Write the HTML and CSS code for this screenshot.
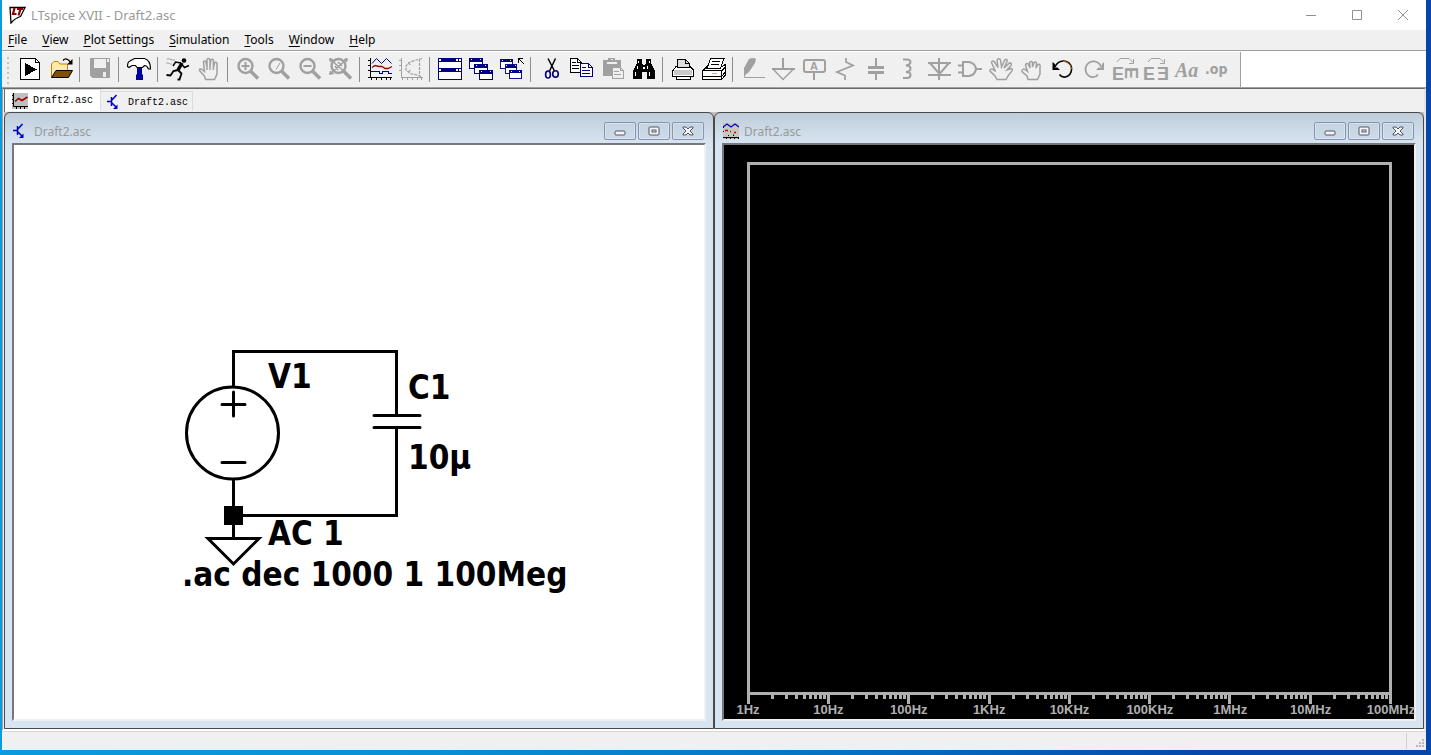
FILE: index.html
```html
<!DOCTYPE html>
<html lang="en">
<head>
    <meta charset="UTF-8">
    <meta name="viewport" content="width=device-width, initial-scale=1.0">
    <title>LTspice XVII - Draft2.asc</title>
    <link rel="stylesheet" href="styles.css">
</head>
<body>
    <!-- Shared symbols -->
    <svg class="defs" aria-hidden="true">
        <symbol id="lens" viewBox="0 0 24 24">
            <circle cx="9.5" cy="9" r="7" fill="none" stroke="#a0a0a0" stroke-width="2.4"/>
            <path d="M14.500 14L22 21.500" stroke="#a0a0a0" stroke-width="3.600"/>
        </symbol>
        <symbol id="transistor" viewBox="0 0 16 16">
            <path d="M0 7.500H4M4.500 3V12M5 6L9.500 1M5 9L9 13" fill="none" stroke="#0000c0" stroke-width="1.500"/>
            <path d="M10.500 10.500V15H6z" fill="#0000c0"/>
        </symbol>
        <symbol id="decade" viewBox="0 0 81 9">
            <path d="M0 0h3v9h-3zM24 0h3v4h-3zM38 0h3v4h-3zM48 0h3v4h-3zM56 0h3v4h-3zM62 0h3v4h-3zM67 0h3v4h-3zM72 0h3v4h-3zM76 0h3v4h-3z" fill="#b0b0b0"/>
        </symbol>
        <symbol id="cascade" viewBox="0 0 24 24">
            <g fill="#fff" stroke="#000080">
                <path d="M.5 1.500h13v10H.5z"/><path d="M1 3h13" stroke-width="3"/>
                <path d="M5.500 7.500h13v9h-13z"/><path d="M6 9h13" stroke-width="3"/>
                <path d="M10.500 13.500h13v9h-13z"/><path d="M11 15h13" stroke-width="3"/>
            </g>
            <path d="M2 2h1v1H2zM11 2h1v1h-1zM7 8h1v1H7zM16 8h1v1h-1zM12 14h1v1h-1zM21 14h1v1h-1z" fill="#fff"/>
        </symbol>
    </svg>

    <div class="app">
        <header class="titlebar">
            <svg class="logo" width="18" height="18" viewBox="0 0 18 18">
                <path d="M2 1.500H17L12.500 10.500C9 11.500 6 13.500 3 17z" fill="#fff" stroke="#000" stroke-width="1.300"/>
                <path d="M6.500 2L5 8H8.500M9 3H15M12.500 3L10.500 9.500" fill="none" stroke="#8b0000" stroke-width="2.200"/>
            </svg>
            <h1>LTspice XVII - Draft2.asc</h1>
            <div class="caption-buttons">
                <button aria-label="Minimize"><svg width="12" height="12"><path d="M1 6.500H11"/></svg></button>
                <button aria-label="Maximize"><svg width="12" height="12"><path d="M1.500 1.500h9v9h-9z"/></svg></button>
                <button aria-label="Close"><svg width="12" height="12"><path d="M1 1L11 11M11 1L1 11"/></svg></button>
            </div>
        </header>

        <nav class="menubar">
            <button><u>F</u>ile</button>
            <button><u>V</u>iew</button>
            <button><u>P</u>lot Settings</button>
            <button><u>S</u>imulation</button>
            <button><u>T</u>ools</button>
            <button><u>W</u>indow</button>
            <button><u>H</u>elp</button>
        </nav>

        <div class="toolbar-row">
            <div class="toolbar" role="toolbar" aria-label="Main">
                <span class="grip"></span>
                <button aria-label="Run"><svg viewBox="0 0 24 24" class="crisp"><path d="M2.500 1.500H17.500L21.500 5.500V22.500H2.500z" fill="#fff" stroke="#000"/><path d="M17.500 1.500V5.500H21.500" fill="none" stroke="#000"/><path d="M7 6L19 12.500 7 19z"/></svg></button>
                <button aria-label="Open"><svg viewBox="0 0 24 24"><path d="M2.500 20V7L5 4.500H9L11 7H18.500V13" fill="#ffe9b0" stroke="#c08000"/><path d="M2.500 20.500L7 13.500H23.500L19.500 20.500z" fill="#805000" stroke="#000"/><path d="M14 3.500C16 1 19.500 1.500 21.500 5.500" fill="none" stroke="#000" stroke-width="1.300"/><path d="M23.500 2V7.500H18z"/></svg></button>
                <span class="sep"></span>
                <button aria-label="Save"><svg viewBox="0 0 24 24" class="crisp"><path d="M2 1h20v20H4l-2-2z" fill="#a0a0a0"/><path d="M6 2h12v9H6zM19 2h2v3h-2zM15 15h3v5h-3z" fill="#efefef"/></svg></button>
                <span class="sep"></span>
                <button aria-label="Control panel"><svg viewBox="0 0 24 24"><path d="M10 9h5v8l1 1v5H9v-5l1-1z" fill="#0000a0"/><path d="M.5 9.500C.5 7 1.500 4.500 3 4L7.500 1.500H17.500C21 2.500 23.500 6 23.500 12H21.500C20.500 9.500 19 8.500 17.500 8.500L15.500 10.500H10L8.500 8.500H5L2 10.500z" fill="#fff" stroke="#000" stroke-width="1.200"/></svg></button>
                <span class="sep"></span>
                <button aria-label="Run simulation"><svg viewBox="0 0 24 24"><circle cx="18" cy="3.500" r="2.300"/><g fill="none" stroke="#000"><path d="M16 6L12 13" stroke-width="3.500"/><path d="M15 6L9.500 5 7 9M15.500 7L18.500 10.500 23 8.500" stroke-width="1.500"/><path d="M12 13L7.500 14 4.500 18.500.5 18M12 13L15.500 16.500 13.500 22.500H11.500" stroke-width="1.800"/></g><path d="M1 2C4 1 6 4 9 3M0 6C3 5 4 8 6 7" fill="none" stroke="#a0a0a0"/></svg></button>
                <button aria-label="Halt"><svg viewBox="0 0 24 24"><path d="M8.500 22.500L7.500 19 2.500 13.500C2 12 4 11.500 5 12.500L7.500 14.500 6.500 5C7 3.500 8.500 4 9 5L10 10V2.500C10.500 1 12.500 1 13 2.500V10L13.800 3C14.500 1.800 16 2 16.400 3V11L17.500 6C18 5 19.800 5 20 6.500V17L17.500 22.500zM10 10V13M13 10V13M16.400 10V13" fill="none" stroke="#a0a0a0" stroke-width="1.500"/></svg></button>
                <span class="sep"></span>
                <button aria-label="Zoom in"><svg viewBox="0 0 24 24"><use href="#lens"/><path d="M5.500 9H13.500M9.500 5V13" stroke="#a0a0a0" stroke-width="2"/></svg></button>
                <button aria-label="Pan"><svg viewBox="0 0 24 24"><use href="#lens"/><path d="M9 12.500L13 6" stroke="#a0a0a0"/></svg></button>
                <button aria-label="Zoom out"><svg viewBox="0 0 24 24"><use href="#lens"/><path d="M5.500 9H13.500" stroke="#a0a0a0" stroke-width="2"/></svg></button>
                <button aria-label="Zoom to fit"><svg viewBox="0 0 24 24"><use href="#lens"/><path d="M1 2L18 17M18 2L1 17M0 2.500H4M15 2.500H19M1.500 5V1M17.500 5V1M1.500 14V18M0 16.500H5M6 9L9 13M9 5L13 9" fill="none" stroke="#a0a0a0" stroke-width="1.600"/></svg></button>
                <span class="sep"></span>
                <button aria-label="Autorange"><svg viewBox="0 0 24 24"><path class="crisp" d="M2.500 1V20.500H24M0 3.500H2M0 8.500H2M0 13.500H2M0 20.500H2M3.500 21V23M8.500 21V23M13.500 21V23M18.500 21V23M22.500 21V23" fill="none" stroke="#000"/><path d="M4 6.500L8.500 1.500 13.500 6.500 18.500 1.500 23.500 6.500" fill="none" stroke="#000080"/><path d="M4 10.500L7 8.500 11 9.500 14 9.500 17 11.500H20L24 9.500" fill="none" stroke="#a00000" stroke-width="1.300"/><path class="crisp" d="M3 14.500H11.500V16.500H14.500V14.500H20.500V16.500H24" fill="none" stroke="#0000a0"/></svg></button>
                <button aria-label="Plot limits"><svg viewBox="0 0 24 24"><path class="crisp" d="M2.500 1V20.500H24M0 3.500H2M0 8.500H2M0 13.500H2M3.500 21V23M8.500 21V23M13.500 21V23M18.500 21V23M22.500 21V23" fill="none" stroke="#a0a0a0"/><path d="M23 1.500L17 3 10 5.500 7 9V13L11 16.500 18 18 23 20M20.500 2V19M9 6L12 8M9 15L12 13" fill="none" stroke="#a0a0a0" stroke-width="1.200" stroke-dasharray="3 1"/></svg></button>
                <span class="sep"></span>
                <button aria-label="Tile windows"><svg viewBox="0 0 24 24" class="crisp"><path d="M.5 1.500h23v21H.5z" fill="#fff" stroke="#000080"/><path d="M0 1h24v4H0zM0 11h24v4H0z" fill="#000080"/><path d="M1 2h2v2H1zM18 2h2v2h-2zM21 2h2v2h-2zM1 12h2v2H1zM18 12h2v2h-2zM21 12h2v2h-2z" fill="#fff"/></svg></button>
                <button aria-label="Cascade windows"><svg viewBox="0 0 24 24" class="crisp"><use href="#cascade"/></svg></button>
                <button aria-label="Close windows"><svg viewBox="0 0 24 24" class="crisp"><use href="#cascade" x="0" y="1" width="22" height="22"/><path d="M18 1h5v1h-3l4 5v1l-5-5v3h-1z"/></svg></button>
                <span class="sep"></span>
                <button aria-label="Cut"><svg viewBox="0 0 24 24"><path d="M9 1.500L15.500 14M16.500 1.500L10.500 14" stroke="#000" stroke-width="1.500"/><g fill="none" stroke="#000080" stroke-width="1.600"><ellipse cx="9" cy="17.500" rx="2.400" ry="3.500"/><ellipse cx="16.500" cy="17" rx="2.800" ry="3.200"/></g></svg></button>
                <button aria-label="Copy"><svg viewBox="0 0 24 24" class="crisp"><path d="M.5 1.500h7l4 4v10H.5z" fill="#fff" stroke="#000"/><path d="M7.500 1.500v4h4M2 5.500h4M2 8.500h7M2 11.500h7" fill="none" stroke="#000"/><path d="M10.500 6.500h8l4 4v9h-12z" fill="#fff" stroke="#000080"/><path d="M18.500 6.500v4h4M12 10.500h4M12 13.500h8M12 16.500h8" fill="none" stroke="#000080"/></svg></button>
                <button aria-label="Paste"><svg viewBox="0 0 24 24" class="crisp"><path d="M2 3h5V1h7v2h6v16H2z" fill="#a0a0a0"/><path d="M6 5h10v2H6zM10 2h2v1h-2z" fill="#efefef"/><path d="M11.500 10.500h8l3 3v8h-11z" fill="#efefef" stroke="#a0a0a0"/><path d="M19.500 10.500v3h3M13 14.500h5M13 17.500h7" stroke="#a0a0a0" fill="none"/></svg></button>
                <button aria-label="Find"><svg viewBox="0 0 24 24" class="crisp"><path d="M5 2h5v4l1 2h2l1-2V2h5v4l3 6 1 2v8h-8v-7h-5v7H1v-8l1-2 3-6z"/><path d="M6 4h1v2H6zM17 4h1v2h-1zM5 9h1v3H5zM15 9h1v3h-1zM3 15h1v4H3zM17 15h1v4h-1zM11 10h2v2h-2z" fill="#fff"/></svg></button>
                <span class="sep"></span>
                <button aria-label="Print"><svg viewBox="0 0 24 24" class="crisp"><path d="M1.500 19.500V14L5 9.500H19L22.500 13V19.500H19.500V22.500H5.500V19.500z" fill="#fff" stroke="#000"/><path d="M6.500 10.500V2.500H14L18.500 6.500V10.500z" fill="#ddd" stroke="#000"/><path d="M14.500 2.500V6.500H18.500M5.500 19.500H19.500" fill="none" stroke="#000"/><path d="M3 13h18v5H3z" fill="#c8c8c8"/></svg></button>
                <button aria-label="Print setup"><svg viewBox="0 0 24 24" class="crisp"><path d="M.5 14L5 9.500H20L23.500 7.500V18L19.500 22.500H.5z" fill="#fff" stroke="#000"/><path d="M5 11.500L8.500 1.500H22L18.500 11.500z" fill="#fff" stroke="#000"/><path d="M10 4.500H18M9 7.500H17M1 13.500H19.500V22M19.500 14L24 9.500M1 19.500H19.500L23 15.500" fill="none" stroke="#000"/><path d="M10 16.500H15" stroke="#e0b040"/></svg></button>
                <span class="sep"></span>
                <button aria-label="Wire"><svg viewBox="0 0 24 24"><path d="M8 2Q12 0 15 2L14 6 8 15 3 19V11z" fill="#a0a0a0"/><path d="M3.500 15V20.500H24" fill="none" stroke="#a0a0a0"/></svg></button>
                <button aria-label="Ground"><svg viewBox="0 0 24 24"><path d="M11 1V12M0 12H23" stroke="#a0a0a0" stroke-width="2"/><path d="M1.500 12.500L11 22.500 21 12.500" fill="none" stroke="#a0a0a0" stroke-width="1.500"/></svg></button>
                <button aria-label="Label net"><svg viewBox="0 0 24 24"><rect x="1" y="3" width="21" height="12" rx="2" fill="none" stroke="#a0a0a0" stroke-width="2"/><path d="M11 16V23" stroke="#a0a0a0" stroke-width="2"/><text x="11" y="13" class="glyph-label">A</text></svg></button>
                <button aria-label="Resistor"><svg viewBox="0 0 24 24"><path d="M12 1V5L19 8.500 3 15 11 18.500V23" fill="none" stroke="#a0a0a0" stroke-width="1.800"/></svg></button>
                <button aria-label="Capacitor"><svg viewBox="0 0 24 24" class="crisp"><path d="M10 1h2v8h7v3H3V9h7zM3 14h16v3h-7v6h-2v-6H3z" fill="#a0a0a0"/></svg></button>
                <button aria-label="Inductor"><svg viewBox="0 0 24 24"><path d="M7 2.500H11Q14.500 2.500 14.500 5T10 8.500Q14.500 8.500 14.500 11.500T10 15Q14.500 15 14.500 18T11 21H7" fill="none" stroke="#a0a0a0" stroke-width="2"/></svg></button>
                <button aria-label="Diode"><svg viewBox="0 0 24 24"><path d="M12 1V23M1 6H24M1 18H24M3 6L12.500 17 22 6" fill="none" stroke="#a0a0a0" stroke-width="2"/></svg></button>
                <button aria-label="Component"><svg viewBox="0 0 24 24"><path d="M5 5H11Q17 6 18 12 17 18 11 19H5zM0 8.500H5M0 15.500H5M18 12H24" fill="none" stroke="#a0a0a0" stroke-width="2"/></svg></button>
                <button aria-label="Move"><svg viewBox="0 0 24 24"><path d="M8 22.500L6 19 1 14C.5 12 3 11.500 4 12.500L6.500 14.500 2.500 5.500C3 3.500 5 3.500 5.500 5L9 10.500 8 3C9 1 11 1.500 11.500 3L12.500 10 16 2.500C17.500 1.500 18.500 3 18 4.500L15 11 20.500 6C22 5.500 23 7 22 8.500L18 13 22.500 11.500C24 12 23.500 14 22 15L19 19 17 22.500z" fill="none" stroke="#a0a0a0" stroke-width="1.500"/></svg></button>
                <button aria-label="Drag"><svg viewBox="0 0 24 24"><path d="M8 22.500L7 19 2 14.500C1.500 12.500 4 11.500 5 12.500L7.500 14.500 5.500 8C6 6 8 6 8.500 7.500L10 11 9.500 5.500C10.500 4 12 4 12.500 5.500V10L14 5.500C15 4.500 16.500 5 16.500 6.500L16 11 18 7.500C19.500 7 20.500 8 20 10V17L17.500 22.500z" fill="none" stroke="#a0a0a0" stroke-width="1.500"/></svg></button>
                <button aria-label="Undo"><svg viewBox="0 0 24 24"><path d="M4 10C7 3 14 3 18 6 23 11 20 19 14.500 20 11.500 20.500 9.500 19 8.500 17.500" fill="none" stroke="#000" stroke-width="1.600"/><path d="M12 4.500C17 4 20 8 20.500 12" fill="none" stroke="#b07010"/><path d="M1.500 5V13H9L6.500 10.500H4V7z"/></svg></button>
                <button aria-label="Redo"><svg viewBox="0 0 24 24"><path d="M19.500 10C16 3 9 3 5.500 7 1.500 12 4 19 10 20 13 20.500 15 19 16 17.500" fill="none" stroke="#a0a0a0" stroke-width="1.800"/><path d="M22 5V13H14L16.500 10.500H20V7z" fill="#a0a0a0"/></svg></button>
                <button aria-label="Rotate"><svg viewBox="0 0 24 24"><path d="M4 5L7 1.500H16L20 5.500M20.500 2V6.500H16" fill="none" stroke="#a0a0a0"/><text x="-1" y="23" class="glyph-e">E</text><text transform="translate(12 11) rotate(90)" x="-1" y="0" class="glyph-e">E</text></svg></button>
                <button aria-label="Mirror"><svg viewBox="0 0 24 24"><path d="M4 5L7 1.500H16L20 5.500M20.500 2V6.500H16" fill="none" stroke="#a0a0a0"/><text x="-1" y="23" class="glyph-e">E</text><text transform="translate(25 23) rotate(180)" x="0" y="13" class="glyph-e">E</text></svg></button>
                <button aria-label="Text"><svg viewBox="0 0 24 24"><text x="0" y="20" class="glyph-aa">Aa</text></svg></button>
                <button aria-label="SPICE directive"><svg viewBox="0 0 24 24"><text x="-1" y="17" class="glyph-op">.op</text></svg></button>
            </div>
        </div>

        <main class="workspace">
            <div class="tabs" role="tablist">
                <button class="tab active" role="tab" aria-selected="true">
                    <svg width="16" height="16" viewBox="0 0 16 16"><path d="M0 0h16v16H0z" fill="#c0c0c0"/><path d="M1.500 0V13.500H16M0 2.500H2M0 6.500H2M0 10.500H2M4.500 13V16M8.500 13V16M12.500 13V16" stroke="#000" fill="none"/><path d="M3 8.500L6.500 5.500 10 7.500 15.500 4" stroke="#a00000" stroke-width="1.500" fill="none"/></svg>
                    Draft2.asc
                </button>
                <button class="tab" role="tab" aria-selected="false">
                    <svg width="16" height="16"><use href="#transistor"/></svg>
                    Draft2.asc
                </button>
            </div>

            <div class="mdi">
                <section class="child">
                    <header class="child-title">
                        <svg width="16" height="16"><use href="#transistor"/></svg>
                        <h2>Draft2.asc</h2>
                        <div class="child-buttons">
                            <button aria-label="Minimize"><svg width="14" height="12"><rect x="2" y="6" width="10" height="4" rx="1"/></svg></button>
                            <button aria-label="Maximize"><svg width="14" height="12"><rect x="2" y="2" width="10" height="8" rx="1"/><rect x="5" y="5" width="4" height="2"/></svg></button>
                            <button aria-label="Close"><svg width="14" height="12"><path d="M2 2h3l2 2 2-2h3v1L9 6l3 3v1H9L7 8l-2 2H2V9l3-3-3-3z"/></svg></button>
                        </div>
                    </header>
                    <div class="client">
                        <svg class="schematic" role="img" aria-label="Schematic">
                            <g class="wires">
                                <!-- wires -->
                                <path d="M219.500 241V206.500H382.500V270M382.500 283V370.500H219.500M219.500 335V393"/>
                                <!-- V1 -->
                                <circle cx="218.500" cy="288" r="46"/>
                                <path d="M208 259.500H231M219.500 247V271M208 317.500H231"/>
                                <!-- C1 -->
                                <path d="M360 270.500H406M360 282.500H406"/>
                                <!-- ground -->
                                <path d="M194 393.500H245L219.500 419z"/>
                            </g>
                            <rect x="210" y="361" width="19" height="19"/>
                            <g class="labels">
                                <text x="254" y="243">V1</text>
                                <text x="394" y="254">C1</text>
                                <text x="394" y="324">10µ</text>
                                <text x="254" y="400">AC 1</text>
                                <text x="168" y="441">.ac dec 1000 1 100Meg</text>
                            </g>
                        </svg>
                    </div>
                </section>

                <section class="child">
                    <header class="child-title">
                        <svg width="16" height="16" viewBox="0 0 16 16"><path d="M0 0h16v16H0z" fill="#c8c8c0"/><path d="M0 4L4 1 8 4 12 1 16 4" stroke="#0000c0" stroke-width="1.200" fill="none"/><path d="M2 7.500H5M7 8.500H8M11 9.500H13" stroke="#c00000" stroke-width="1.500"/><path d="M0 14.500H16M.5 4V5M.5 8V9M5.500 12V13M10.500 11.500V13M3.500 15V16M7.500 15V16M11.500 15V16M15.500 15V16" stroke="#000"/></svg>
                        <h2>Draft2.asc</h2>
                        <div class="child-buttons">
                            <button aria-label="Minimize"><svg width="14" height="12"><rect x="2" y="6" width="10" height="4" rx="1"/></svg></button>
                            <button aria-label="Maximize"><svg width="14" height="12"><rect x="2" y="2" width="10" height="8" rx="1"/><rect x="5" y="5" width="4" height="2"/></svg></button>
                            <button aria-label="Close"><svg width="14" height="12"><path d="M2 2h3l2 2 2-2h3v1L9 6l3 3v1H9L7 8l-2 2H2V9l3-3-3-3z"/></svg></button>
                        </div>
                    </header>
                    <div class="client plot">
                        <div class="plot-frame"></div>
                        <svg class="ticks crisp" viewBox="0 0 645 9" preserveAspectRatio="none">
                            <use href="#decade" x="0" width="81" height="9"/>
                            <use href="#decade" x="80" width="81" height="9"/>
                            <use href="#decade" x="160" width="81" height="9"/>
                            <use href="#decade" x="241" width="81" height="9"/>
                            <use href="#decade" x="321" width="81" height="9"/>
                            <use href="#decade" x="401" width="81" height="9"/>
                            <use href="#decade" x="481" width="81" height="9"/>
                            <use href="#decade" x="562" width="81" height="9"/>
                            <path d="M642 0h3v9h-3z" fill="#b0b0b0"/>
                        </svg>
                        <div class="freqs">
                            <span>1Hz</span>
                            <span>10Hz</span>
                            <span>100Hz</span>
                            <span>1KHz</span>
                            <span>10KHz</span>
                            <span>100KHz</span>
                            <span>1MHz</span>
                            <span>10MHz</span>
                            <span>100MHz</span>
                        </div>
                    </div>
                </section>
            </div>
        </main>

        <footer class="statusbar">
            <span class="status-text"></span>
            <svg class="size-grip crisp" width="9" height="9"><path d="M6 0h2v2H6zM3 3h2v2H3zM6 3h2v2H6zM0 6h2v2H0zM3 6h2v2H3zM6 6h2v2H6z" fill="#b8b8b8"/></svg>
        </footer>
    </div>
</body>
</html>
```
FILE: styles.css
```css
:root {
    --face: #f0f0f0;
    --gray: #a0a0a0;
    --dark: #696969;
    --frame: #d7e4f2;
    --trace: #b0b0b0;
    --font-ui: "Noto Sans", "Open Sans", sans-serif;
}
* { box-sizing: border-box; }
body {
    margin: 0;
    height: 100vh;
    padding: 0 5px 5px 2px;
    background: linear-gradient(90deg, #0a9bdc 0%, #0a90d2 30%, #0670c0 60%, #0646a8 85%);
    font-family: var(--font-ui);
    font-size: 12px;
    color: #000;
}
button {
    border: none;
    background: none;
    padding: 0;
    font: inherit;
    color: inherit;
}
h1, h2 {
    margin: 0;
    font-size: 12px;
    font-weight: 400;
    color: #999;
}
h1 { font-size: 13px; }
.defs { position: absolute; width: 0; height: 0; }
.crisp { shape-rendering: crispEdges; }
.app {
    height: 100%;
    display: flex;
    flex-direction: column;
    background: var(--face);
}

/* Title bar and menu */
.titlebar {
    height: 30px;
    flex: none;
    display: flex;
    align-items: center;
    gap: 5px;
    padding-left: 6px;
    background: #fff;
}
.caption-buttons { margin-left: auto; display: flex; }
.caption-buttons button {
    width: 46px;
    height: 28px;
    display: flex;
    align-items: center;
    justify-content: center;
}
.caption-buttons svg { fill: none; stroke: #8f8f98; }
.menubar {
    height: 21px;
    flex: none;
    display: flex;
    align-items: center;
    gap: 15px;
    padding: 0 0 2px 6px;
    border-bottom: 1px solid var(--gray);
}
.menubar u { text-underline-offset: 2px; }

/* Toolbar */
.toolbar-row {
    flex: none;
    display: flex;
    background: #fff;
    padding-top: 1px;
    border-bottom: 1px solid var(--gray);
}
.toolbar {
    display: flex;
    height: 35px;
    padding-right: 7px;
    background: var(--face);
    border-right: 1px solid var(--gray);
}
.toolbar button {
    width: 31px;
    padding: 5px 3px 6px 4px;
}
.toolbar svg {
    display: block;
    width: 24px;
    height: 24px;
    overflow: visible;
}
.grip {
    width: 2px;
    margin: 5px 5px 3px;
    background: repeating-linear-gradient(#c4c4c4 0 2px, transparent 2px 5px);
}
.sep {
    width: 1px;
    margin: 5px 4px 5px 3px;
    background: #8c8c94;
}
.glyph-label, .glyph-e, .glyph-aa, .glyph-op { fill: var(--gray); }
.glyph-label { font: 700 11px "Liberation Sans", sans-serif; text-anchor: middle; }
.glyph-e { font: 700 18px "Liberation Sans", sans-serif; }
.glyph-aa { font: italic 700 20px "Liberation Serif", serif; }
.glyph-op { font: 700 14px "DejaVu Sans Condensed", sans-serif; }

/* Document tabs */
.workspace {
    flex: 1;
    min-height: 0;
    display: flex;
    flex-direction: column;
    padding-left: 1px;
    border-top: 1px solid var(--dark);
    border-left: 1px solid var(--gray);
    border-right: 2px solid #e3e3e3;
    border-bottom: 2px solid #fff;
}
.tabs {
    height: 23px;
    flex: none;
    display: flex;
    align-items: flex-start;
    border-left: 1px solid var(--dark);
}
.tab {
    display: flex;
    align-items: center;
    gap: 5px;
    height: 20px;
    margin-top: 2px;
    padding: 1px 4px 0 6px;
    border: 1px solid #dcdcdc;
    border-width: 1px 1px 0 0;
    font-family: "Liberation Mono", "Noto Sans CJK SC", monospace;
    font-size: 10px;
}
.tab.active {
    height: 22px;
    margin-top: 0;
    padding: 0 7px;
    background: #fff;
}

/* MDI child windows */
.mdi {
    flex: 1;
    min-height: 0;
    display: flex;
    background: #c8c0bc;
}
.child {
    flex: 1;
    min-width: 0;
    display: flex;
    flex-direction: column;
    padding: 0 7px 7px;
    border: 1px solid #4a4a4a;
    border-radius: 6px 6px 0 0;
    background: linear-gradient(#bfcddb, var(--frame) 30px);
}
.child-title {
    height: 30px;
    flex: none;
    display: flex;
    align-items: center;
    gap: 5px;
    padding: 6px 2px 0 1px;
}
.child-buttons {
    margin-left: auto;
    display: flex;
    gap: 2px;
}
.child-buttons button {
    width: 32px;
    height: 18px;
    display: flex;
    align-items: center;
    justify-content: center;
    border: 1px solid #8595ad;
    border-radius: 2px;
    background: linear-gradient(#c6d3e1, #cddbe9);
    box-shadow: inset 0 0 0 1px #d8e3ef;
}
.child-buttons svg { fill: #f4f4f4; stroke: #50566a; stroke-width: 1px; }
.client {
    flex: 1;
    min-height: 0;
    background: #fff;
    border: 2px solid;
    border-color: #777 #f0f0f0 #f0f0f0 #777;
}
.schematic {
    display: block;
    width: 100%;
    height: 100%;
}
.wires {
    fill: none;
    stroke: #000;
    stroke-width: 3px;
    stroke-linecap: round;
}
.labels {
    font-family: "DejaVu Sans Condensed", Tahoma, sans-serif;
    font-size: 33px;
    font-weight: 700;
}

/* Waveform pane */
.plot {
    display: flex;
    flex-direction: column;
    padding: 17px 22px 0 23px;
    background: #000;
}
.plot-frame {
    flex: 1;
    border: 3px solid var(--trace);
}
.ticks {
    display: block;
    width: 100%;
    height: 9px;
}
.freqs {
    display: flex;
    justify-content: space-between;
    height: 15px;
    margin: 0 1px;
    font: 700 13px/12px "Liberation Sans", Arial, sans-serif;
    color: var(--trace);
}
.freqs span {
    width: 0;
    display: flex;
    justify-content: center;
    white-space: nowrap;
}

/* Status bar */
.statusbar {
    height: 19px;
    flex: none;
    display: flex;
    align-items: flex-end;
    border-top: 1px solid #d7d7d7;
}
.status-text {
    flex: 1;
    align-self: stretch;
    margin: 1px 0;
    border-right: 1px solid #d0d0d0;
}
.size-grip { margin: 0 1px 2px 9px; }
```
